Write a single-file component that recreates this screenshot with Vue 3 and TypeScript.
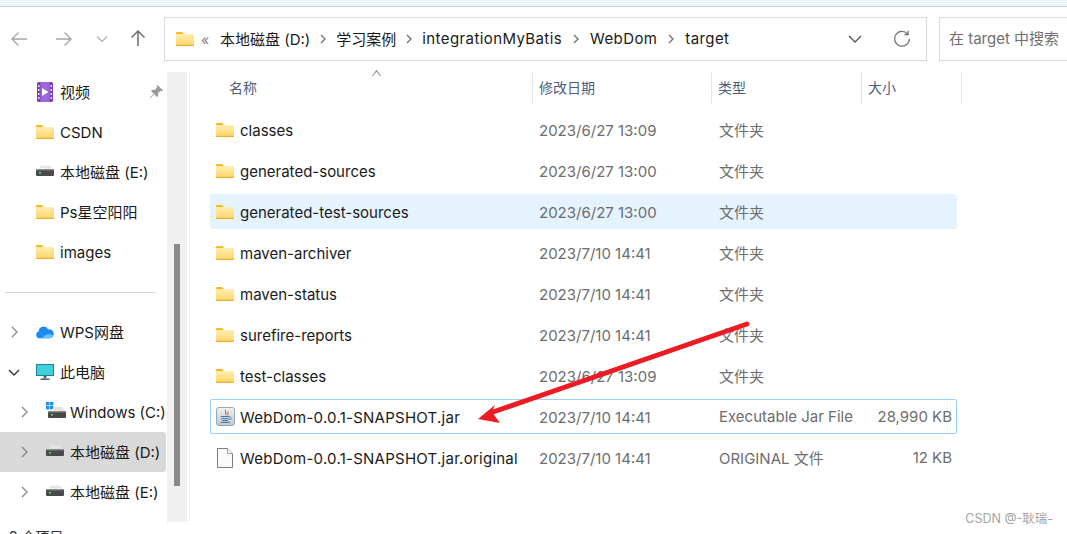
<script setup lang="ts">
interface NavItem {
  label: string
  icon: 'video' | 'folder' | 'drive' | 'windows' | 'cloud' | 'pc'
  level: number
  arrow?: 'right' | 'down'
  pin?: boolean
  active?: boolean
}

interface FileRow {
  name: string
  icon: 'folder' | 'jar' | 'doc'
  date: string
  type: string
  size?: string
  hover?: boolean
  focus?: boolean
}

const pinned: NavItem[] = [
  { label: '视频', icon: 'video', level: 0, pin: true },
  { label: 'CSDN', icon: 'folder', level: 0 },
  { label: '本地磁盘 (E:)', icon: 'drive', level: 0 },
  { label: 'Ps星空阳阳', icon: 'folder', level: 0 },
  { label: 'images', icon: 'folder', level: 0 }
]

const places: NavItem[] = [
  { label: 'WPS网盘', icon: 'cloud', level: 0, arrow: 'right' },
  { label: '此电脑', icon: 'pc', level: 0, arrow: 'down' },
  { label: 'Windows (C:)', icon: 'windows', level: 1, arrow: 'right' },
  { label: '本地磁盘 (D:)', icon: 'drive', level: 1, arrow: 'right', active: true },
  { label: '本地磁盘 (E:)', icon: 'drive', level: 1, arrow: 'right' }
]

const crumbs = ['本地磁盘 (D:)', '学习案例', 'integrationMyBatis', 'WebDom', 'target']

const files: FileRow[] = [
  { name: 'classes', icon: 'folder', date: '2023/6/27 13:09', type: '文件夹' },
  { name: 'generated-sources', icon: 'folder', date: '2023/6/27 13:00', type: '文件夹' },
  { name: 'generated-test-sources', icon: 'folder', date: '2023/6/27 13:00', type: '文件夹', hover: true },
  { name: 'maven-archiver', icon: 'folder', date: '2023/7/10 14:41', type: '文件夹' },
  { name: 'maven-status', icon: 'folder', date: '2023/7/10 14:41', type: '文件夹' },
  { name: 'surefire-reports', icon: 'folder', date: '2023/7/10 14:41', type: '文件夹' },
  { name: 'test-classes', icon: 'folder', date: '2023/6/27 13:09', type: '文件夹' },
  { name: 'WebDom-0.0.1-SNAPSHOT.jar', icon: 'jar', date: '2023/7/10 14:41', type: 'Executable Jar File', size: '28,990 KB', focus: true },
  { name: 'WebDom-0.0.1-SNAPSHOT.jar.original', icon: 'doc', date: '2023/7/10 14:41', type: 'ORIGINAL 文件', size: '12 KB' }
]

const navIcon = (icon: NavItem['icon']) => `#i-${icon}`
const isLatin = (text: string) => /^[\x20-\x7e]+$/.test(text)
</script>

<template>
  <div class="explorer">
    <!-- shared icons -->
    <svg class="defs" width="0" height="0" aria-hidden="true">
      <defs>
        <linearGradient id="folder-fill" x1="0" y1="0" x2="0" y2="1">
          <stop offset="0" stop-color="#ffeeb0" />
          <stop offset="1" stop-color="#fdd56a" />
        </linearGradient>
        <linearGradient id="jar-fill" x1="0" y1="0" x2="0" y2="1">
          <stop offset="0" stop-color="#f0f3f6" />
          <stop offset="1" stop-color="#bcc8d3" />
        </linearGradient>
      </defs>
      <symbol id="i-folder" viewBox="0 0 18 14">
        <path d="M0 1a1 1 0 0 1 1-1h5l2 2h-8z" fill="#fbb81e" />
        <rect x="0" y="2" width="18" height="12" fill="url(#folder-fill)" />
        <rect x="0" y="12.8" width="18" height="1.2" fill="#eeb02c" />
      </symbol>
      <symbol id="i-drive" viewBox="0 0 18 14">
        <path d="M3 3.500 5 0.500h9l2.500 3z" fill="#e6e6e6" />
        <rect x="0" y="4" width="18" height="7" rx="1" fill="#4a4a4a" />
        <rect x="0" y="4" width="18" height="1.400" fill="#8b8b8b" />
        <rect x="3" y="7" width="2" height="1.600" fill="#55d66b" />
      </symbol>
      <symbol id="i-windows" viewBox="0 0 20 20">
        <rect x="0" y="0" width="3.400" height="3.400" fill="#1e8fe6" />
        <rect x="4" y="0" width="3.400" height="3.400" fill="#1e8fe6" />
        <rect x="0" y="4" width="3.400" height="3.400" fill="#1e8fe6" />
        <rect x="4" y="4" width="3.400" height="3.400" fill="#1e8fe6" />
        <path d="M5 8.500 8 5h8l3 4z" fill="#e2e2e2" />
        <rect x="2" y="9" width="18" height="7" rx="1" fill="#484848" />
        <rect x="2" y="9" width="18" height="1.400" fill="#8b8b8b" />
        <rect x="5" y="12" width="2" height="1.600" fill="#55d66b" />
      </symbol>
      <symbol id="i-video" viewBox="0 0 16 20">
        <rect width="16" height="20" rx="1.500" fill="#7a3fc0" />
        <rect x="3.400" y="0" width="9.200" height="20" fill="#9a68d8" />
        <path d="M5 6l6.500 4L5 14z" fill="#fff" />
        <g fill="#e9ddf7">
          <rect x="1" y="3" width="1.500" height="2" />
          <rect x="1" y="7" width="1.500" height="2" />
          <rect x="1" y="11" width="1.500" height="2" />
          <rect x="1" y="15" width="1.500" height="2" />
          <rect x="13.500" y="3" width="1.500" height="2" />
          <rect x="13.500" y="7" width="1.500" height="2" />
          <rect x="13.500" y="11" width="1.500" height="2" />
          <rect x="13.500" y="15" width="1.500" height="2" />
        </g>
      </symbol>
      <symbol id="i-cloud" viewBox="0 0 20 14">
        <path d="M4 14a4 4 0 0 1-1-7.800A5.500 5.500 0 0 1 13.400 4 4.900 4.900 0 0 1 15.800 14z" fill="#1d8cf0" />
        <path d="M7 14c2-4 7-6 12-3-1 2-2 3-3.500 3z" fill="#6cc0fa" />
      </symbol>
      <symbol id="i-pc" viewBox="0 0 18 16">
        <rect x="0" y="0" width="18" height="12" fill="#1d7f9c" />
        <rect x="1" y="1" width="16" height="10" fill="#3fd0dc" />
        <rect x="7.500" y="12" width="3" height="2.500" fill="#50636e" />
        <rect x="4.500" y="14.500" width="9" height="1.500" fill="#50636e" />
      </symbol>
      <symbol id="i-jar" viewBox="0 0 20 20">
        <rect x="0.500" y="0.500" width="19" height="19" rx="2.500" fill="url(#jar-fill)" stroke="#93a1ae" />
        <path d="M10.500 3c-2.500 2 1.500 3-.5 5.500M13 5c-2 1.500 .8 2.300-1 3.800" fill="none" stroke="#e0622a" stroke-width="1.100" />
        <path d="M5 10h9.500M5.500 12.300h8M6.500 14.300h6M5 16.200h9.500" fill="none" stroke="#3f6f9b" stroke-width="1" />
        <path d="M14.500 10.500c2 0 2 2.500-.8 2.800" fill="none" stroke="#3f6f9b" stroke-width=".9" />
      </symbol>
      <symbol id="i-doc" viewBox="0 0 16 20">
        <path d="M.5.500h10l5 5v14H.5z" fill="#fafafa" stroke="#7d7d7d" />
        <path d="M10.500.500v5h5" fill="#fff" stroke="#a0a0a0" />
      </symbol>
    </svg>

    <div class="title-strip"></div>

    <div class="toolbar">
      <div class="nav-buttons">
        <svg class="tool back" width="18" height="16" viewBox="0 0 18 16">
          <path d="M17 8H2M8.500 1.500 2 8l6.500 6.500" fill="none" stroke="#a6a6a6" stroke-width="1.400" />
        </svg>
        <svg class="tool forward" width="18" height="16" viewBox="0 0 18 16">
          <path d="M1 8h15M9.500 1.500 16 8l-6.500 6.500" fill="none" stroke="#a6a6a6" stroke-width="1.400" />
        </svg>
        <svg class="tool more" width="12" height="8" viewBox="0 0 12 8">
          <path d="M1 1.500l5 5 5-5" fill="none" stroke="#b5b5b5" stroke-width="1.400" />
        </svg>
        <svg class="tool up" width="16" height="18" viewBox="0 0 16 18">
          <path d="M8 17V2M1.500 8.500 8 2l6.500 6.500" fill="none" stroke="#6e6e6e" stroke-width="1.500" />
        </svg>
      </div>

      <div class="address">
        <svg class="address-folder" width="18" height="14"><use href="#i-folder" /></svg>
        <span class="overflow">«</span>
        <template v-for="(crumb, i) in crumbs" :key="crumb">
          <span class="crumb" :class="{ 'crumb--latin': isLatin(crumb) }">{{ crumb }}</span>
          <svg v-if="i < crumbs.length - 1" class="crumb-sep" width="6" height="10" viewBox="0 0 6 10">
            <path d="M1 1l4 4-4 4" fill="none" stroke="#6e6e6e" stroke-width="1.300" />
          </svg>
        </template>
        <svg class="address-down" width="14" height="8" viewBox="0 0 14 8">
          <path d="M1 1l6 6 6-6" fill="none" stroke="#555" stroke-width="1.300" />
        </svg>
        <svg class="refresh" width="18" height="18" viewBox="0 0 18 18">
          <path d="M14.500 3.800A7.400 7.400 0 1 0 16.400 9" fill="none" stroke="#757575" stroke-width="1.300" />
          <path d="M15.200 .8v3.700h-3.700" fill="none" stroke="#757575" stroke-width="1.300" />
        </svg>
      </div>

      <div class="search">在 target 中搜索</div>
    </div>

    <div class="body">
      <aside class="sidebar">
        <div
          v-for="item in pinned"
          :key="item.label + item.icon"
          class="nav-row"
        >
          <span class="nav-arrow"></span>
          <svg
            class="nav-icon"
            :class="`nav-icon--${item.icon}`"
            :width="item.icon === 'video' ? 16 : 18"
            :height="item.icon === 'video' ? 20 : 14"
          ><use :href="navIcon(item.icon)" /></svg>
          <span class="nav-label" :class="{ 'nav-label--latin': isLatin(item.label) }">{{ item.label }}</span>
          <svg v-if="item.pin" class="pin" width="14" height="14" viewBox="0 0 14 14">
            <path d="M8.500 0 14 5.500l-1.500.8-1-.5L9 8.500 9.200 11l-1.200 1-2.800-2.800L1 13.500 .5 13l4.300-4.200L2 6l1-1.200 2.500.2L8.200 2.500l-.5-1z" fill="#9a9a9a" />
          </svg>
        </div>

        <div class="nav-divider"><span></span></div>

        <div
          v-for="item in places"
          :key="item.label"
          class="nav-row"
          :class="{ 'nav-row--active': item.active, 'nav-row--child': item.level === 1 }"
        >
          <span class="nav-arrow">
            <svg v-if="item.arrow === 'right'" width="7" height="12" viewBox="0 0 7 12">
              <path d="M1 1l5 5-5 5" fill="none" stroke="#8a8a8a" stroke-width="1.400" />
            </svg>
            <svg v-else width="12" height="7" viewBox="0 0 12 7">
              <path d="M1 1l5 5 5-5" fill="none" stroke="#333" stroke-width="1.400" />
            </svg>
          </span>
          <svg
            v-if="item.icon === 'windows'"
            class="nav-icon nav-icon--windows"
            width="20"
            height="20"
          ><use href="#i-windows" /></svg>
          <svg
            v-else
            class="nav-icon"
            :class="`nav-icon--${item.icon}`"
            width="18"
            :height="item.icon === 'pc' ? 16 : 14"
          ><use :href="navIcon(item.icon)" /></svg>
          <span class="nav-label" :class="{ 'nav-label--latin': isLatin(item.label) }">{{ item.label }}</span>
        </div>
      </aside>

      <div class="side-scroll"><div class="side-thumb"></div></div>

      <main class="content">
        <div class="col-head">
          <span class="head-name">名称<i class="sort-caret"></i></span>
          <span class="head-cell">修改日期</span>
          <span class="head-cell head-type">类型</span>
          <span class="head-cell head-size">大小</span>
          <span class="head-end"></span>
        </div>

        <div class="rows">
          <div
            v-for="file in files"
            :key="file.name"
            class="file-row"
            :class="{ 'file-row--hover': file.hover, 'file-row--focus': file.focus }"
          >
            <svg v-if="file.icon === 'folder'" class="file-icon" width="18" height="14"><use href="#i-folder" /></svg>
            <svg v-else-if="file.icon === 'jar'" class="file-icon" width="19" height="19"><use href="#i-jar" /></svg>
            <svg v-else class="file-icon file-icon--doc" width="16" height="20"><use href="#i-doc" /></svg>
            <span class="file-name" :class="{ 'file-name--caps': file.icon !== 'folder' }">{{ file.name }}</span>
            <span class="file-date">{{ file.date }}</span>
            <span class="file-meta">{{ file.type }}</span>
            <span class="file-size">{{ file.size }}</span>
          </div>
        </div>
      </main>
    </div>

    <div class="statusbar">9 个项目</div>

    <!-- annotation drawn over the screenshot -->
    <svg class="arrow" width="1067" height="534" viewBox="0 0 1067 534">
      <path d="M747 324 493 412" fill="none" stroke="#ed1c24" stroke-width="5" stroke-linecap="round" />
      <path d="M478 419 495 405 492 412 500 423z" fill="#ed1c24" />
    </svg>

    <div class="watermark">CSDN @-耿瑞-</div>
  </div>
</template>

<style>
html,
body {
  margin: 0;
  overflow: hidden;
  background: #fff;
}
</style>

<style scoped>
.explorer {
  position: relative;
  display: flex;
  flex-direction: column;
  width: 1067px;
  height: 534px;
  overflow: hidden;
  background: #fff;
  color: #1a1a1a;
  font-family: Inter, "Noto Sans CJK SC", sans-serif;
  font-size: 15px;
}

.defs {
  position: absolute;
}

.title-strip {
  flex: none;
  height: 6px;
  background: #eff4f9;
  border-bottom: 1px solid #bed3e2;
}

.toolbar {
  flex: none;
  display: flex;
  gap: 12px;
  height: 55px;
  padding-top: 10px;
}

.nav-buttons {
  flex: none;
  display: flex;
  align-items: center;
  width: 152px;
  height: 44px;
  padding-left: 10px;
  box-sizing: border-box;
}

.tool {
  flex: none;
}

.forward {
  margin-left: 27px;
}

.more {
  margin-left: 23px;
}

.up {
  margin-left: 22px;
  margin-top: -3px;
}

.address {
  flex: none;
  display: flex;
  align-items: center;
  width: 763px;
  height: 44px;
  box-sizing: border-box;
  padding-left: 11px;
  border: 1.500px solid #dadada;
}

.address-folder {
  flex: none;
}

.overflow {
  margin-left: 7px;
  width: 19px;
  color: #7d7d7d;
  font-size: 14px;
}

.crumb {
  padding-bottom: 2px;
  white-space: nowrap;
}

.crumb--latin {
  letter-spacing: 0.4px;
}

.crumb-sep {
  flex: none;
  margin: 0 10px;
}

.crumb--latin + .crumb-sep {
  margin: 0 11px;
}

.address-down {
  flex: none;
  margin-left: auto;
}

.refresh {
  flex: none;
  margin-left: 31px;
  margin-right: 15px;
}

.search {
  flex: none;
  width: 140px;
  height: 44px;
  box-sizing: border-box;
  padding-left: 9px;
  border: 1.500px solid #dadada;
  line-height: 41px;
  color: #6f6f6f;
  white-space: nowrap;
}

.body {
  flex: none;
  display: flex;
  height: 450px;
}

.sidebar {
  flex: none;
  width: 167px;
  overflow: hidden;
}

.nav-row {
  display: flex;
  align-items: center;
  width: 166px;
  height: 40px;
  white-space: nowrap;
  position: relative;
}

.nav-row--active {
  background: #d9d9d9;
  border-radius: 0 3px 3px 0;
}

.nav-arrow {
  flex: none;
  display: flex;
  align-items: center;
  justify-content: center;
  width: 28px;
}

.nav-row--child .nav-arrow {
  width: 48px;
}

.nav-icon {
  flex: none;
  margin-left: 8px;
}

.nav-row--child .nav-icon {
  margin-left: -2px;
}

.nav-icon--video {
  margin-left: 9px;
  margin-right: 1px;
}

.nav-icon--windows {
  margin-right: -2px;
}

.nav-label {
  margin-left: 6px;
  padding-bottom: 1px;
}

.nav-label--latin {
  padding-bottom: 0;
  padding-top: 1px;
}

.pin {
  position: absolute;
  left: 149px;
  top: 13px;
}

.nav-divider {
  display: flex;
  align-items: center;
  height: 40px;
  padding-left: 5px;
}

.nav-divider span {
  width: 151px;
  height: 1px;
  background: #d4d4d4;
}

.side-scroll {
  flex: none;
  width: 20px;
  background: #f0f0f0;
}

.side-thumb {
  width: 6px;
  height: 242px;
  margin: 172px 0 0 7px;
  background: #8a8a8a;
}

.content {
  flex: 1;
  margin-left: 2px;
  padding-left: 20px;
  border-left: 1px solid #f0f0f0;
}

.col-head {
  display: grid;
  grid-template-columns: 322px 179px 150px 100px 1px;
  height: 32px;
  line-height: 32px;
  color: #4c607a;
  font-size: 14px;
}

.head-name {
  position: relative;
  padding-left: 19px;
}

.sort-caret {
  position: absolute;
  left: 163px;
  top: 0;
  width: 6px;
  height: 6px;
  border-left: 1px solid #8a8a8a;
  border-top: 1px solid #8a8a8a;
  transform: rotate(45deg) skew(8deg, 8deg);
}

.head-cell {
  padding-left: 6px;
  border-left: 1px solid #e5e5e5;
}

.head-end {
  background: #e5e5e5;
}

.rows {
  display: flex;
  flex-direction: column;
  gap: 6px;
  width: 747px;
  padding-top: 8px;
}

.file-row {
  display: grid;
  grid-template-columns: 30px 299px 180px 142px 91px;
  align-items: center;
  height: 35px;
  padding-right: 5px;
  border-radius: 2px;
  white-space: nowrap;
}

.file-row--hover {
  background: #e5f3ff;
}

.file-row--focus {
  box-shadow: inset 0 0 0 1px #99d1ff;
}

.file-icon {
  margin-left: 6px;
}

.file-icon--doc {
  margin-left: 7px;
}

.file-name {
  padding-top: 2px;
}

.file-name--caps {
  letter-spacing: 0.25px;
}

.file-date {
  padding-top: 2px;
  color: #6d6d6d;
}

.file-meta {
  color: #6d6d6d;
}

.file-size {
  color: #6d6d6d;
  text-align: right;
}

.statusbar {
  flex: none;
  padding-left: 9px;
  line-height: 20px;
  margin-top: 5px;
  color: #333;
  font-size: 14px;
}

.arrow {
  position: absolute;
  left: 0;
  top: 0;
  pointer-events: none;
}

.watermark {
  position: absolute;
  right: 14px;
  top: 508px;
  color: #a3a3a3;
  font-size: 12.500px;
  white-space: nowrap;
}
</style>
